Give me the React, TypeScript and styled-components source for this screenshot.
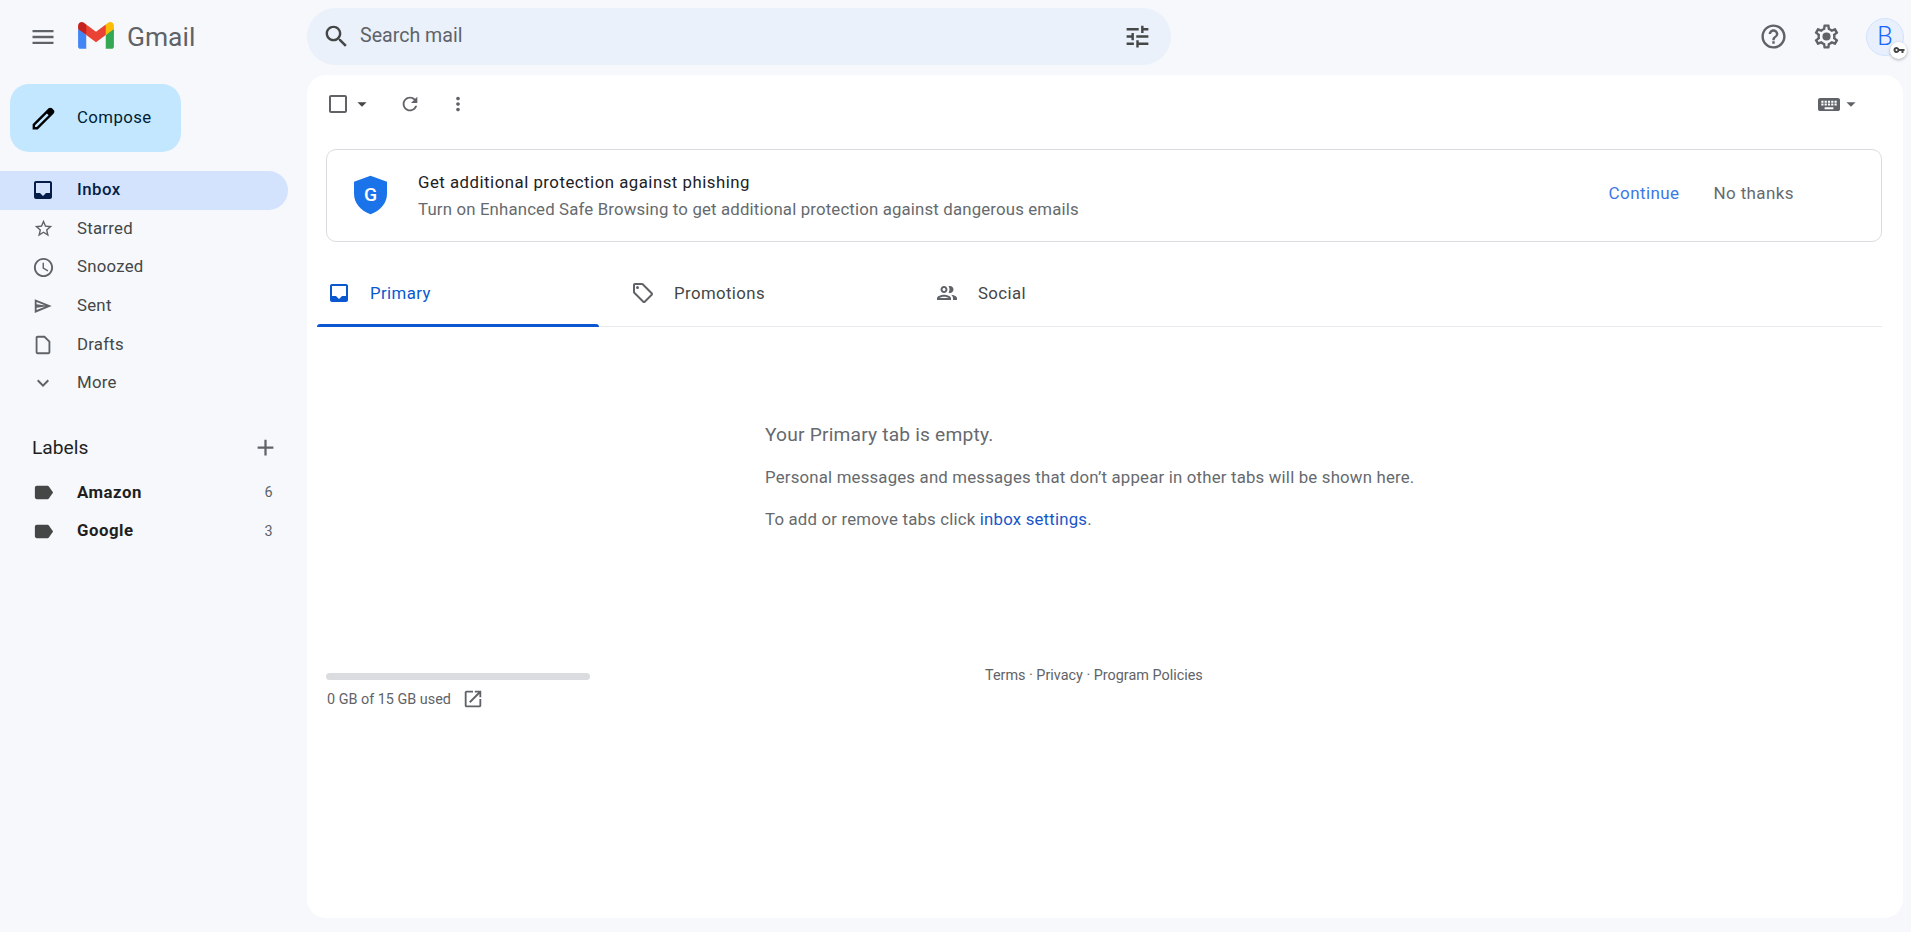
import React from "react";
import styled, { createGlobalStyle } from "styled-components";

const Global = createGlobalStyle`
  html, body { margin: 0; padding: 0; height: 100%; }
  body { background: #f6f8fc; font-family: Roboto, "Liberation Sans", sans-serif; color: #202124; overflow: hidden; }
  * { box-sizing: border-box; }
`;

const P = {
  menu: "M3 18h18v-2H3v2zm0-5h18v-2H3v2zm0-7v2h18V6H3z",
  search: "M15.5 14h-.79l-.28-.27C15.41 12.59 16 11.11 16 9.5 16 5.91 13.09 3 9.5 3S3 5.91 3 9.5 5.91 16 9.5 16c1.61 0 3.09-.59 4.23-1.57l.27.28v.79l5 4.99L20.49 19l-4.99-5zm-6 0C7.01 14 5 11.99 5 9.5S7.01 5 9.5 5 14 7.01 14 9.5 11.99 14 9.5 14z",
  tune: "M3 17v2h6v-2H3zM3 5v2h10V5H3zm10 16v-2h8v-2h-8v-2h-2v6h2zM7 9v2H3v2h4v2h2V9H7zm14 4v-2H11v2h10zm-6-4h2V7h4V5h-4V3h-2v6z",
  help: "M11 18h2v-2h-2v2zm1-16C6.48 2 2 6.48 2 12s4.48 10 10 10 10-4.48 10-10S17.52 2 12 2zm0 18c-4.41 0-8-3.59-8-8s3.59-8 8-8 8 3.59 8 8-3.59 8-8 8zm0-14c-2.21 0-4 1.79-4 4h2c0-1.1.9-2 2-2s2 .9 2 2c0 2-3 1.75-3 5h2c0-2.25 3-2.5 3-5 0-2.21-1.79-4-4-4z",
  gear: "M19.43 12.98c.04-.32.07-.64.07-.98 0-.34-.03-.66-.07-.98l2.11-1.65c.19-.15.24-.42.12-.64l-2-3.46c-.09-.16-.26-.25-.44-.25-.06 0-.12.01-.17.03l-2.49 1c-.52-.4-1.08-.73-1.69-.98l-.38-2.65C14.46 2.18 14.25 2 14 2h-4c-.25 0-.46.18-.49.42l-.38 2.65c-.61.25-1.17.59-1.69.98l-2.49-1c-.06-.02-.12-.03-.18-.03-.17 0-.34.09-.43.25l-2 3.46c-.13.22-.07.49.12.64l2.11 1.65c-.04.32-.07.65-.07.98 0 .33.03.66.07.98l-2.11 1.65c-.19.15-.24.42-.12.64l2 3.46c.09.16.26.25.44.25.06 0 .12-.01.17-.03l2.49-1c.52.4 1.08.73 1.69.98l.38 2.65c.03.24.24.42.49.42h4c.25 0 .46-.18.49-.42l.38-2.65c.61-.25 1.17-.59 1.69-.98l2.49 1c.06.02.12.03.18.03.17 0 .34-.09.43-.25l2-3.46c.12-.22.07-.49-.12-.64l-2.11-1.65zm-1.98-1.71c.04.31.05.52.05.73 0 .21-.02.43-.05.73l-.14 1.13.89.7 1.08.84-.7 1.21-1.27-.51-1.04-.42-.9.68c-.43.32-.84.56-1.25.73l-1.06.43-.16 1.13-.2 1.35h-1.4l-.19-1.35-.16-1.13-1.06-.43c-.43-.18-.83-.41-1.23-.71l-.91-.7-1.06.43-1.27.51-.7-1.21 1.08-.84.89-.7-.14-1.13c-.03-.31-.05-.54-.05-.74s.02-.43.05-.73l.14-1.13-.89-.7-1.08-.84.7-1.21 1.27.51 1.04.42.9-.68c.43-.32.84-.56 1.25-.73l1.06-.43.16-1.13.2-1.35h1.39l.19 1.35.16 1.13 1.06.43c.43.18.83.41 1.23.71l.91.7 1.06-.43 1.27-.51.7 1.21-1.07.85-.89.7.14 1.13zM12 8.6a3.4 3.4 0 1 0 0 6.8 3.4 3.4 0 0 0 0-6.8z",
  refresh: "M17.65 6.35C16.2 4.9 14.21 4 12 4c-4.42 0-7.99 3.58-7.99 8s3.57 8 7.99 8c3.73 0 6.84-2.55 7.73-6h-2.08c-.82 2.33-3.04 4-5.65 4-3.31 0-6-2.69-6-6s2.69-6 6-6c1.66 0 3.14.69 4.22 1.78L13 11h7V4l-2.35 2.35z",
  more: "M12 8c1.1 0 2-.9 2-2s-.9-2-2-2-2 .9-2 2 .9 2 2 2zm0 2c-1.1 0-2 .9-2 2s.9 2 2 2 2-.9 2-2-.9-2-2-2zm0 6c-1.1 0-2 .9-2 2s.9 2 2 2 2-.9 2-2-.9-2-2-2z",
  check: "M19 5v14H5V5h14m0-2H5c-1.1 0-2 .9-2 2v14c0 1.1.9 2 2 2h14c1.1 0 2-.9 2-2V5c0-1.1-.9-2-2-2z",
  inbox: "M19 3H5c-1.1 0-2 .9-2 2v14c0 1.1.9 2 2 2h14c1.1 0 2-.9 2-2V5c0-1.1-.9-2-2-2zm0 12h-4l-3 3-3-3H5V5h14v10z",
  star: "M22 9.24l-7.19-.62L12 2 9.19 8.63 2 9.24l5.46 4.73L5.82 21 12 17.27 18.18 21l-1.63-7.03L22 9.24zM12 15.4l-3.76 2.27 1-4.28-3.32-2.88 4.38-.38L12 6.1l1.71 4.04 4.38.38-3.32 2.88 1 4.28L12 15.4z",
  clock: "M11.99 2C6.47 2 2 6.48 2 12s4.47 10 9.99 10C17.52 22 22 17.52 22 12S17.52 2 11.99 2zM12 20c-4.42 0-8-3.58-8-8s3.58-8 8-8 8 3.58 8 8-3.58 8-8 8zm.5-13H11v6l5.25 3.15.75-1.23-4.5-2.67z",
  send: "M3 4.5v15L21.5 12 3 4.5zM5 7.6l9.6 3.9L5 10.2V7.6zm0 6.2l9.6-1.3L5 16.4v-2.6z",
  draft: "M6 2c-1.1 0-2 .9-2 2v16c0 1.1.9 2 2 2h12c1.1 0 2-.9 2-2V8l-6-6H6zm0 2h7.17L18 8.83V20H6V4z",
  expand: "M16.59 8.59L12 13.17 7.41 8.59 6 10l6 6 6-6z",
  add: "M19 13h-6v6h-2v-6H5v-2h6V5h2v6h6v2z",
  label: "M17.63 5.84C17.27 5.33 16.67 5 16 5L5 5.01C3.9 5.01 3 5.9 3 7v10c0 1.1.9 1.99 2 1.99L16 19c.67 0 1.27-.33 1.63-.84L22 12l-4.37-6.16z",
  tag: "M21.41 11.58l-9-9C12.05 2.22 11.55 2 11 2H4c-1.1 0-2 .9-2 2v7c0 .55.22 1.05.59 1.42l9 9c.36.36.86.58 1.41.58s1.05-.22 1.41-.59l7-7c.37-.36.59-.86.59-1.41s-.23-1.06-.59-1.42zM13 20.01L4 11V4h7v-.01l9 9-7 7.02zM6.5 5a1.5 1.5 0 1 0 0 3 1.5 1.5 0 0 0 0-3z",
  people: "M9 13.75c-2.34 0-7 1.17-7 3.5V19h14v-1.75c0-2.33-4.66-3.5-7-3.5zM4.34 17c.84-.58 2.87-1.25 4.66-1.25s3.82.67 4.66 1.25H4.34zM9 12c1.93 0 3.5-1.57 3.5-3.5S10.93 5 9 5 5.5 6.57 5.5 8.5 7.07 12 9 12zm0-5c.83 0 1.5.67 1.5 1.5S9.83 10 9 10s-1.5-.67-1.5-1.5S8.17 7 9 7zm7.04 6.81c1.16.84 1.96 1.96 1.96 3.44V19h4v-1.75c0-2.02-3.5-3.17-5.96-3.44zM15 12c1.93 0 3.5-1.57 3.5-3.5S16.93 5 15 5c-.54 0-1.04.13-1.5.35.63.89 1 1.98 1 3.15s-.37 2.26-1 3.15c.46.22.96.35 1.5.35z",
  open: "M19 19H5V5h7V3H5c-1.11 0-2 .9-2 2v14c0 1.1.89 2 2 2h14c1.1 0 2-.9 2-2v-7h-2v7zM14 3v2h3.59l-9.83 9.83 1.41 1.41L19 6.41V10h2V3h-7z",
  pencil: "M20.41 4.94l-1.35-1.35c-.78-.78-2.05-.78-2.83 0L3 16.82V21h4.18L20.41 7.77c.79-.78.79-2.05 0-2.83zm-14 14.12L5 19v-1.36l9.82-9.82 1.41 1.41-9.82 9.83z",
  keyboard: "M20 5H4c-1.1 0-1.99.9-1.99 2L2 17c0 1.1.9 2 2 2h16c1.1 0 2-.9 2-2V7c0-1.1-.9-2-2-2zm-9 3h2v2h-2V8zm0 3h2v2h-2v-2zM8 8h2v2H8V8zm0 3h2v2H8v-2zm-1 2H5v-2h2v2zm0-3H5V8h2v2zm9 7H8v-2h8v2zm0-4h-2v-2h2v2zm0-3h-2V8h2v2zm3 3h-2v-2h2v2zm0-3h-2V8h2v2z",
  caret: "M7 10l5 5 5-5z",
  key: "M12.65 10A6 6 0 1 0 12.65 14H17v4h4v-4h2v-4H12.65zM7 14a2 2 0 1 1 0-4 2 2 0 0 1 0 4z",
};

const IconSvg = styled.svg<{ $size: number; $color: string }>`
  width: ${(p) => p.$size}px;
  height: ${(p) => p.$size}px;
  fill: ${(p) => p.$color};
  flex: none;
  display: block;
`;

const Icon = ({ d, size = 24, color = "#444746" }: { d: string; size?: number; color?: string }) => (
  <IconSvg viewBox="0 0 24 24" $size={size} $color={color}>
    <path d={d} />
  </IconSvg>
);

const IconSlot = styled.span`
  width: 24px;
  height: 24px;
  flex: none;
  display: flex;
  align-items: center;
  justify-content: center;
`;

const Page = styled.div`
  height: 932px;
  display: flex;
  flex-direction: column;
`;

const Header = styled.header`
  height: 75px;
  flex: none;
  display: flex;
  align-items: flex-start;
  padding: 8px 0 0 0;
`;

const Brand = styled.div`
  width: 307px;
  height: 57px;
  flex: none;
  display: flex;
  align-items: center;
  padding-left: 29px;
`;

const LogoMark = styled.svg`
  width: 36px;
  height: 27px;
  margin: 0 0 2px 21px;
  flex: none;
`;

const LogoText = styled.span`
  margin-left: 13px;
  font-size: 26.4px;
  color: #5f6368;
`;

const Search = styled.div`
  width: 864px;
  height: 57px;
  background: #eaf1fb;
  border-radius: 29px;
  display: flex;
  align-items: center;
  padding: 0 19px 0 15px;
  color: #5f6368;
  font-size: 19.6px;
`;

const SearchText = styled.span`
  margin: 0 0 2px 9px;
  flex: 1;
`;

const Actions = styled.div`
  margin-left: auto;
  height: 57px;
  display: flex;
  align-items: center;
  padding-right: 7px;
`;

const ActionSlot = styled.div`
  width: 53px;
  display: flex;
  justify-content: center;
`;

const Avatar = styled.div`
  position: relative;
  margin-left: 13px;
  width: 38px;
  height: 38px;
  border-radius: 50%;
  background: #e8f0fe;
  border: 1px solid #d3e3fd;
  color: #1a66ff;
  font-size: 25px;
  font-weight: 300;
  display: flex;
  align-items: center;
  justify-content: center;
`;

const KeyBadge = styled.div`
  position: absolute;
  right: -4px;
  bottom: -4px;
  width: 17px;
  height: 17px;
  background: #fff;
  border-radius: 50%;
  box-shadow: 0 1px 3px rgba(60, 64, 67, 0.4);
  display: flex;
  align-items: center;
  justify-content: center;
`;

const Body = styled.div`
  flex: 1;
  min-height: 0;
  display: flex;
`;

const Sidebar = styled.nav`
  width: 307px;
  flex: none;
`;

const Compose = styled.div`
  margin: 9px 0 0 10px;
  width: 171px;
  height: 68px;
  background: #c2e7ff;
  border-radius: 19px;
  display: flex;
  align-items: center;
  padding-left: 19px;
  gap: 19px;
  font-size: 16.8px;
  font-weight: 400;
  letter-spacing: 0.4px;
  color: #001d35;
`;

const ComposeLabel = styled.span`
  margin-bottom: 2px;
`;

const NavList = styled.div`
  margin-top: 19px;
  width: 288px;
`;

const NavRow = styled.div<{ $active?: boolean; $bold?: boolean }>`
  height: 38.6px;
  display: flex;
  align-items: center;
  padding: 0 15px 0 31px;
  border-radius: 0 20px 20px 0;
  font-size: 16.8px;
  letter-spacing: ${(p) => (p.$active || p.$bold ? "0.5px" : "0.25px")};
  background: ${(p) => (p.$active ? "#d3e3fd" : "transparent")};
  color: ${(p) => (p.$active ? "#041e49" : p.$bold ? "#1f1f1f" : "#444746")};
  font-weight: ${(p) => (p.$active ? 500 : p.$bold ? 700 : 400)};
`;

const NavLabel = styled.span`
  margin: 0 0 2px 22px;
  flex: 1;
`;

const Count = styled.span`
  font-size: 14.4px;
  font-weight: 400;
  color: #5f6368;
`;

const LabelsHead = styled.div`
  margin: 25px 0 6px;
  height: 40px;
  display: flex;
  align-items: center;
  justify-content: space-between;
  padding: 0 9px 0 32px;
  font-size: 19.2px;
  color: #1f1f1f;
`;

const Card = styled.main`
  flex: 1;
  min-width: 0;
  margin: 0 8px 14px 0;
  background: #fff;
  border-radius: 19px;
  padding: 0 21px 0 19px;
`;

const Toolbar = styled.div`
  height: 58px;
  display: flex;
  align-items: center;
`;

const ToolLeft = styled.div`
  display: flex;
  align-items: center;
`;

const ToolGap = styled.div<{ $w: number }>`
  width: ${(p) => p.$w}px;
  flex: none;
`;

const ToolRight = styled.div`
  margin-left: auto;
  display: flex;
  align-items: center;
`;

const KeyboardIcon = styled.svg`
  width: 22px;
  height: 13px;
  fill: #5f6368;
  display: block;
`;

const Banner = styled.div`
  margin: 16px 0 0 0;
  height: 93px;
  border: 1px solid #dadce0;
  border-radius: 10px;
  display: flex;
  align-items: center;
  padding: 0 87px 0 27px;
`;

const Shield = styled.svg`
  width: 33px;
  height: 40px;
  flex: none;
  margin-bottom: 2px;
`;

const BannerText = styled.div`
  margin: 0 0 0 31px;
  flex: 1;
  display: flex;
  flex-direction: column;
  gap: 7px;
`;

const BannerTitle = styled.div`
  font-size: 16.8px;
  line-height: 20px;
  font-weight: 450;
  letter-spacing: 0.5px;
  color: #202124;
`;

const BannerSub = styled.div`
  font-size: 16.8px;
  line-height: 20px;
  letter-spacing: 0.16px;
  color: #666a6e;
`;

const TextButton = styled.span<{ $primary?: boolean }>`
  font-size: 17px;
  font-weight: 400;
  letter-spacing: 0.4px;
  margin-bottom: 5px;
  color: ${(p) => (p.$primary ? "#3b78e7" : "#666a6e")};
  margin-left: ${(p) => (p.$primary ? "0" : "34px")};
`;

const Tabs = styled.div`
  margin-top: 17px;
  height: 68px;
  border-bottom: 1px solid #e8eaed;
  display: flex;
  margin-left: -9px;
`;

const Tab = styled.div<{ $active?: boolean }>`
  position: relative;
  width: 282px;
  margin-right: 22px;
  display: flex;
  align-items: center;
  padding: 0 0 0 10px;
  font-size: 16.8px;
  font-weight: 450;
  letter-spacing: 0.4px;
  color: ${(p) => (p.$active ? "#0b57d0" : "#444746")};

  ${(p) =>
    p.$active
      ? `&::after {
    content: "";
    position: absolute;
    left: 0;
    right: 0;
    bottom: -1px;
    height: 3px;
    background: #0b57d0;
    border-radius: 3px 3px 0 0;
  }`
      : ""}
`;

const TabLabel = styled.span`
  margin-left: 19px;
`;

const Empty = styled.section`
  padding-top: 95px;
  width: 680px;
  color: #666a6e;
  font-size: 16.8px;
  letter-spacing: 0.19px;
  margin-left: 439px;
`;

const EmptyTitle = styled.div`
  font-size: 19.2px;
  line-height: 26px;
  margin-bottom: 18px;
`;

const EmptyLine = styled.div`
  line-height: 22px;
  margin-bottom: 20px;
`;

const Link = styled.a`
  color: #1a55c8;
  text-decoration: none;
`;

const Footer = styled.footer`
  margin-top: 143px;
  display: grid;
  grid-template-columns: 264px 1fr;
`;

const Storage = styled.div`
  display: flex;
  flex-direction: column;
`;

const StorageBar = styled.div`
  height: 7px;
  border-radius: 4px;
  background: #dadce0;
`;

const StorageText = styled.div`
  margin-top: 8px;
  display: flex;
  align-items: center;
  gap: 11px;
  font-size: 14.4px;
  color: #5f6368;
  padding-left: 1px;
`;

const Policies = styled.div`
  font-size: 14.4px;
  line-height: 18px;
  color: #5f6368;
  padding-left: 395px;
  margin-top: -6px;
`;

const rows = [
  { d: P.inbox, text: "Inbox", active: true, size: 24 },
  { d: P.star, text: "Starred", size: 21 },
  { d: P.clock, text: "Snoozed", size: 23 },
  { d: P.send, text: "Sent", size: 22 },
  { d: P.draft, text: "Drafts", size: 22 },
  { d: P.expand, text: "More", size: 24 },
];

const labels = [
  { text: "Amazon", count: 6 },
  { text: "Google", count: 3 },
];

export default function App() {
  return (
    <Page>
      <Global />
      <Header>
        <Brand>
          <Icon d={P.menu} size={28} color="#5f6368" />
          <LogoMark viewBox="0 0 256 193">
            <path fill="#4285F4" d="M58.182 192.05V93.14L27.507 65.077 0 49.504v125.091c0 9.658 7.825 17.455 17.455 17.455h40.727Z" />
            <path fill="#34A853" d="M197.818 192.05h40.727c9.659 0 17.455-7.826 17.455-17.455V49.505l-31.156 17.837-27.026 25.798v98.91Z" />
            <path fill="#EA4335" d="m58.182 93.14-4.174-38.647 4.174-36.989L128 69.868l69.818-52.364 4.669 34.992-4.669 40.644L128 145.504z" />
            <path fill="#FBBC04" d="M197.818 17.504V93.14L256 49.504V26.231c0-21.585-24.64-33.89-41.89-20.945l-16.292 12.218Z" />
            <path fill="#C5221F" d="M0 49.504l26.759 20.07L58.182 93.14V17.504L41.89 5.286C24.61-7.66 0 4.646 0 26.23v23.273Z" />
          </LogoMark>
          <LogoText>Gmail</LogoText>
        </Brand>
        <Search>
          <Icon d={P.search} size={29} color="#444746" />
          <SearchText>Search mail</SearchText>
          <Icon d={P.tune} size={29} color="#444746" />
        </Search>
        <Actions>
          <ActionSlot><Icon d={P.help} size={29} color="#5f6368" /></ActionSlot>
          <ActionSlot><Icon d={P.gear} size={29} color="#5f6368" /></ActionSlot>
          <Avatar>
            B
            <KeyBadge><Icon d={P.key} size={12} color="#444746" /></KeyBadge>
          </Avatar>
        </Actions>
      </Header>
      <Body>
        <Sidebar>
          <Compose>
            <Icon d={P.pencil} size={29} color="#000" />
            <ComposeLabel>Compose</ComposeLabel>
          </Compose>
          <NavList>
            {rows.map((r) => (
              <NavRow key={r.text} $active={r.active}>
                <IconSlot>
                  <Icon d={r.d} size={r.size} color={r.active ? "#041e49" : "#5f6368"} />
                </IconSlot>
                <NavLabel>{r.text}</NavLabel>
              </NavRow>
            ))}
            <LabelsHead>
              Labels
              <Icon d={P.add} size={27} color="#5f6368" />
            </LabelsHead>
            {labels.map((l) => (
              <NavRow key={l.text} $bold>
                <IconSlot>
                  <Icon d={P.label} size={23} color="#444746" />
                </IconSlot>
                <NavLabel>{l.text}</NavLabel>
                <Count>{l.count}</Count>
              </NavRow>
            ))}
          </NavList>
        </Sidebar>
        <Card>
          <Toolbar>
            <ToolLeft>
              <Icon d={P.check} size={24} color="#5f6368" />
              <ToolGap $w={1} />
              <Icon d={P.caret} size={22} color="#444746" />
              <ToolGap $w={26} />
              <Icon d={P.refresh} size={22} color="#5f6368" />
              <ToolGap $w={26} />
              <Icon d={P.more} size={22} color="#5f6368" />
            </ToolLeft>
            <ToolRight>
              <KeyboardIcon viewBox="2 5 20 14" preserveAspectRatio="none"><path d={P.keyboard} /></KeyboardIcon>
              <Icon d={P.caret} size={22} color="#5f6368" />
              <ToolGap $w={20} />
            </ToolRight>
          </Toolbar>
          <Banner>
            <Shield viewBox="0 0 36 42">
              <path fill="#1a73e8" d="M18 0 L36 6.5 V20 C36 30 28.5 38.5 18 42 C7.5 38.5 0 30 0 20 V6.5 Z" />
              <text x="18" y="27" textAnchor="middle" fontFamily="Roboto, sans-serif" fontWeight="500" fontSize="21" fill="#fff">G</text>
            </Shield>
            <BannerText>
              <BannerTitle>Get additional protection against phishing</BannerTitle>
              <BannerSub>Turn on Enhanced Safe Browsing to get additional protection against dangerous emails</BannerSub>
            </BannerText>
            <TextButton $primary>Continue</TextButton>
            <TextButton>No thanks</TextButton>
          </Banner>
          <Tabs>
            <Tab $active>
              <Icon d={P.inbox} size={24} color="#0b57d0" />
              <TabLabel>Primary</TabLabel>
            </Tab>
            <Tab>
              <Icon d={P.tag} size={24} color="#5f6368" />
              <TabLabel>Promotions</TabLabel>
            </Tab>
            <Tab>
              <Icon d={P.people} size={24} color="#5f6368" />
              <TabLabel>Social</TabLabel>
            </Tab>
          </Tabs>
          <Empty>
            <EmptyTitle>Your Primary tab is empty.</EmptyTitle>
            <EmptyLine>Personal messages and messages that don’t appear in other tabs will be shown here.</EmptyLine>
            <EmptyLine>To add or remove tabs click <Link>inbox settings</Link>.</EmptyLine>
          </Empty>
          <Footer>
            <Storage>
              <StorageBar />
              <StorageText>
                0 GB of 15 GB used
                <Icon d={P.open} size={22} color="#5f6368" />
              </StorageText>
            </Storage>
            <Policies>Terms · Privacy · Program Policies</Policies>
          </Footer>
        </Card>
      </Body>
    </Page>
  );
}
